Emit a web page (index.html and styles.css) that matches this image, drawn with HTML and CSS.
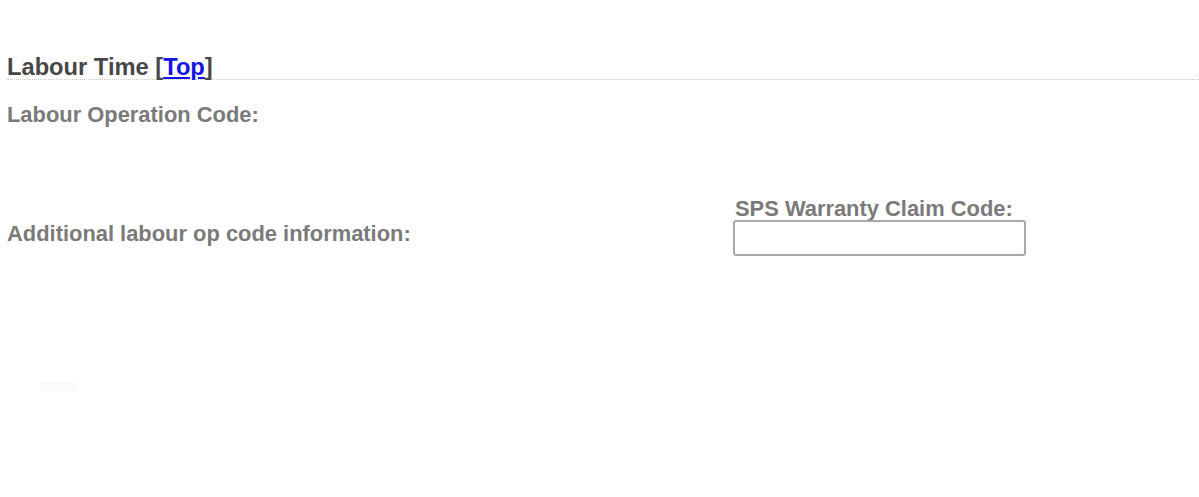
FILE: index.html
```html
<!DOCTYPE html>
<html>
<head>
<meta charset="utf-8">
<link rel="stylesheet" href="styles.css">
</head>
<body>
<div class="page">
  <h2 class="section-title">Labour Time <span class="bracket">[<a href="#top" class="top-link">Top</a>]</span></h2>
  <div class="field-label op-code">Labour Operation Code:</div>
  <div class="row">
    <div class="col-left">
      <div class="field-label additional">Additional labour op code information:</div>
    </div>
    <div class="col-right">
      <label class="field-label sps-label" for="sps">SPS Warranty Claim Code:</label>
      <input id="sps" class="text-input" type="text">
    </div>
  </div>
  <div class="faint-box"></div>
</div>
</body>
</html>
```

FILE: styles.css
```css
html, body {
  margin: 0;
  padding: 0;
  background: #ffffff;
}

.page {
  font-family: "Liberation Sans", Arial, sans-serif;
  padding-top: 55px;
}

.section-title {
  margin: 0 0 0 7px;
  font-size: 23.7px;
  line-height: 24px;
  font-weight: bold;
  color: #474747;
  border-bottom: 1px dotted #c8c8c8;
}

.top-link {
  color: #1414e6;
  text-decoration: underline;
}

.field-label {
  display: block;
  font-size: 21.9px;
  font-weight: bold;
  color: #7a7a7a;
  line-height: 26px;
}

.op-code {
  margin: 22px 0 0 7px;
}

.row {
  display: flex;
  align-items: flex-start;
  margin-top: 70px;
  padding-left: 7px;
}

.col-left {
  width: 726px;
}

.additional {
  margin-top: 23px;
}

.col-right {
  display: flex;
  flex-direction: column;
  align-items: flex-start;
}

.sps-label {
  line-height: 22px;
  padding-left: 2px;
}

.text-input {
  box-sizing: border-box;
  width: 293px;
  height: 36px;
  margin: 0;
  border: 2px solid #a9a9a9;
  border-radius: 3px;
  background: #fff;
}

.faint-box {
  width: 37px;
  height: 9px;
  margin: 126px 0 0 40px;
  background: #fafafa;
}
```
